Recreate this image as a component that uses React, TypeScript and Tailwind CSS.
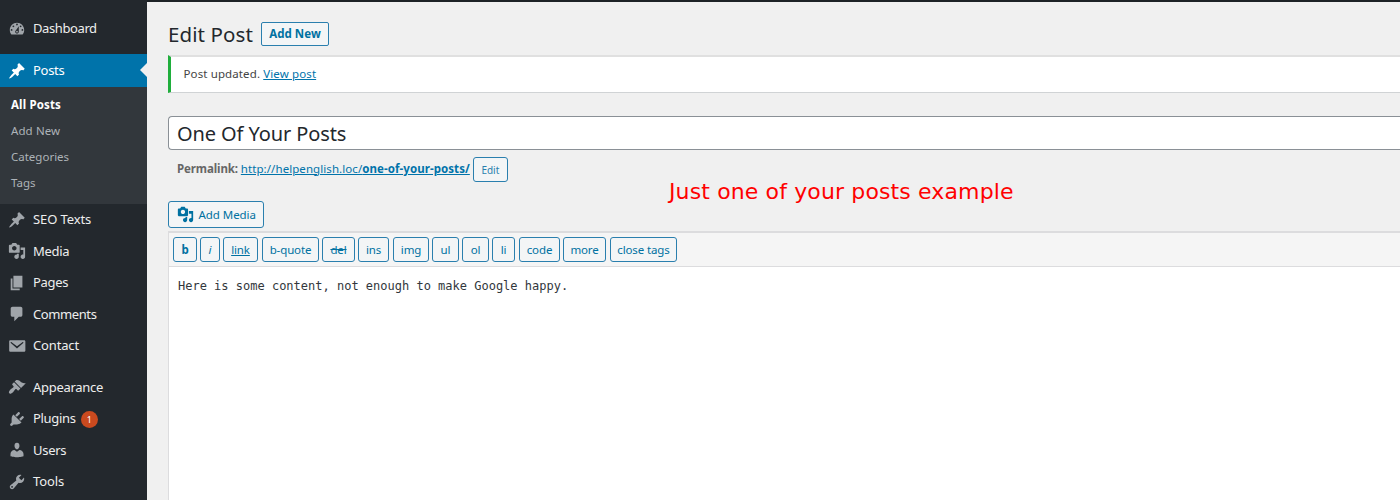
const ICONS = {
  dashboard:
    "M3.76 16h12.48c1.1-1.37 1.76-3.11 1.76-5 0-4.42-3.58-8-8-8s-8 3.58-8 8c0 1.89.66 3.63 1.76 5zM10 4c.55 0 1 .45 1 1s-.45 1-1 1-1-.45-1-1 .45-1 1-1zM6 6c.55 0 1 .45 1 1s-.45 1-1 1-1-.45-1-1 .45-1 1-1zm8 0c.55 0 1 .45 1 1s-.45 1-1 1-1-.45-1-1 .45-1 1-1zm-5.37 5.55L12 7v6c0 1.1-.9 2-2 2s-2-.9-2-2c0-.57.24-1.08.63-1.45zM4 10c.55 0 1 .45 1 1s-.45 1-1 1-1-.45-1-1 .45-1 1-1zm12 0c.55 0 1 .45 1 1s-.45 1-1 1-1-.45-1-1 .45-1 1-1zm-5 3c0-.55-.45-1-1-1s-1 .45-1 1 .45 1 1 1 1-.45 1-1z",
  pin: "M10.44 3.02l1.82-1.82 6.36 6.35-1.83 1.82c-1.05-.68-2.48-.57-3.41.36l-.75.75c-.92.93-1.04 2.35-.35 3.41l-1.83 1.82-2.41-2.41-2.8 2.79c-.42.42-3.38 2.71-3.8 2.29s1.86-3.39 2.28-3.81l2.79-2.79L4.1 9.36l1.83-1.82c1.05.69 2.48.57 3.4-.36l.75-.75c.93-.92 1.05-2.35.36-3.41z",
  media:
    "M13 11V4c0-.55-.45-1-1-1h-1.67L9 1H5L3.67 3H2c-.55 0-1 .45-1 1v7c0 .55.45 1 1 1h10c.55 0 1-.45 1-1zM7 4.5c1.38 0 2.5 1.12 2.5 2.5S8.38 9.5 7 9.5 4.5 8.38 4.5 7 5.62 4.5 7 4.5zM14 6h5v10.5c0 1.38-1.12 2.5-2.5 2.5S14 17.88 14 16.5s1.12-2.5 2.5-2.5c.17 0 .34.02.5.05V9h-3V6zm-4 8.05V13h2v3.5c0 1.38-1.12 2.5-2.5 2.5S7 17.88 7 16.5 8.12 14 9.5 14c.17 0 .34.02.5.05z",
  page: "M6 15V2h10v13H6zm-1 1h8v2H3V5h2v11z",
  comment: "M5 2h9c1.1 0 2 .9 2 2v7c0 1.1-.9 2-2 2h-2l-5 5v-5H5c-1.1 0-2-.9-2-2V4c0-1.1.9-2 2-2z",
  mail: "M2.500 3.500h15.500c.83 0 1.300.67 1.300 1.500v10c0 .83-.67 1.500-1.500 1.500h-15C1.970 16.500 1.300 15.830 1.300 15v-10c0-.83.370-1.500 1.200-1.500zM4 5.700c-.6-.4-1.500.5-.9 1.100L10 12.800l6.900-6c.6-.6-.3-1.500-.9-1.100l-6 4.700z",
  brush:
    "M14.48 11.06L7.41 3.99l1.5-1.5c.5-.56 2.3-.47 3.51.32 1.21.8 1.43 1.28 2.91 2.1 1.18.64 2.45 1.26 4.45.85zm-.71.71L6.7 4.7 4.93 6.47c-.39.39-.39 1.02 0 1.41l1.06 1.06c.39.39.39 1.03 0 1.42-.6.6-1.43 1.11-2.21 1.69-.35.26-.7.53-1.01.84C1.43 14.23.4 16.08 1.4 17.07c.99 1 2.84-.03 4.18-1.36.31-.31.58-.66.85-1.02.57-.78 1.08-1.61 1.69-2.21.39-.39 1.02-.39 1.41 0l1.06 1.06c.39.39 1.02.39 1.41 0z",
  plug: "M13.11 4.36L9.87 7.6 8 5.73l3.24-3.24c.35-.34 1.05-.2 1.56.32.52.51.66 1.21.31 1.55zm-8 1.77l.91-1.12 9.01 9.01-1.19.84c-.71.71-2.63 1.16-3.82 1.16H6.14L4.9 17.26c-.59.59-1.54.59-2.12 0-.59-.58-.59-1.53 0-2.12l1.24-1.24v-3.88c0-1.13.4-3.19 1.09-3.89zm7.26 3.97l3.24-3.24c.34-.35 1.04-.21 1.55.31.52.51.66 1.21.31 1.55l-3.24 3.25z",
  user: "M10 9.25c-2.27 0-2.73-3.44-2.73-3.44C7 4.02 7.82 2 9.97 2c2.16 0 2.98 2.02 2.71 3.81 0 0-.41 3.44-2.68 3.44zm0 2.57L12.72 10c2.39 0 4.52 2.33 4.52 4.53v2.49s-3.65 1.13-7.24 1.13c-3.65 0-7.24-1.13-7.24-1.13v-2.49c0-2.25 1.94-4.48 4.47-4.48z",
  wrench:
    "M16.68 9.77c-1.34 1.34-3.3 1.67-4.95.99l-5.41 6.52c-.99.99-2.59.99-3.58 0s-.99-2.59 0-3.57l6.52-5.42c-.68-1.65-.35-3.61.99-4.95 1.28-1.28 3.12-1.62 4.72-1.06l-2.89 2.89 2.82 2.82 2.86-2.87c.53 1.58.18 3.39-1.08 4.65zM3.81 16.21c.4.39 1.04.39 1.43 0 .4-.4.4-1.04 0-1.43-.39-.4-1.03-.4-1.43 0-.39.39-.39 1.03 0 1.43z",
};

type IconName = keyof typeof ICONS;

function Icon({ name, className }: { name: IconName; className: string }) {
  return (
    <svg viewBox="0 0 20 20" className={className} fill="currentColor" fillRule="evenodd" aria-hidden="true">
      <path d={ICONS[name]} />
    </svg>
  );
}

type Item = { icon: IconName; label: string; badge?: string; track: string };

const contentItems: Item[] = [
  { icon: "pin", label: "SEO Texts", track: "tracking-[-0.1px]" },
  { icon: "media", label: "Media", track: "tracking-[-0.3px]" },
  { icon: "page", label: "Pages", track: "tracking-[-0.3px]" },
  { icon: "comment", label: "Comments", track: "tracking-[-0.4px]" },
  { icon: "mail", label: "Contact", track: "tracking-[-0.15px]" },
];

const adminItems: Item[] = [
  { icon: "brush", label: "Appearance", track: "tracking-[-0.3px]" },
  { icon: "plug", label: "Plugins", badge: "1", track: "tracking-[-0.3px]" },
  { icon: "user", label: "Users", track: "tracking-[-0.3px]" },
  { icon: "wrench", label: "Tools", track: "tracking-[-0.1px]" },
];

function MenuItem({ icon, label, badge, track }: Item) {
  return (
    <li className="flex h-[31.5px] items-center pl-[8px] text-[13px] text-[#eee]">
      <Icon name={icon} className="mr-[7px] size-[18px] shrink-0 text-[#a0a5aa]" />
      <span className={track}>{label}</span>
      {badge && (
        <span className="mt-[2px] ml-[5px] flex size-[17px] items-center justify-center rounded-full bg-[#ca4a1f] text-[9px] text-white">
          {badge}
        </span>
      )}
    </li>
  );
}

function Sidebar() {
  return (
    <nav className="h-full w-[147px] shrink-0 overflow-hidden bg-[#23282d] pt-[13px]">
      <ul>
        <MenuItem icon="dashboard" label="Dashboard" track="tracking-[-0.4px]" />
        <li className="relative mt-[9.5px] flex h-[33px] items-center bg-[#0073aa] pl-[8px] text-[13px] text-white">
          <Icon name="pin" className="mr-[7px] size-[18px] shrink-0" />
          <span className="tracking-[-0.3px]">Posts</span>
          <svg viewBox="0 0 7 14" className="absolute top-[9px] right-0 h-[14px] w-[7px]" fill="#f0f0f0">
            <path d="M7 0v14L0 7z" />
          </svg>
        </li>
      </ul>
      <ul className="flex h-[117px] flex-col bg-[#32373c] pt-[5px] pl-[11px] text-[11.5px] text-[#adb3b8]">
        <li className="flex h-[26px] items-center font-bold tracking-[0.15px] text-white">All Posts</li>
        <li className="flex h-[26px] items-center tracking-[0.1px]">Add New</li>
        <li className="flex h-[26px] items-center">Categories</li>
        <li className="flex h-[26px] items-center">Tags</li>
      </ul>
      <ul>
        {contentItems.map((it) => (
          <MenuItem key={it.label} {...it} />
        ))}
      </ul>
      <ul className="mt-[10px]">
        {adminItems.map((it) => (
          <MenuItem key={it.label} {...it} />
        ))}
      </ul>
    </nav>
  );
}

const quickTags = [
  { label: "b", cls: "w-[24px] mr-[3px] font-bold" },
  { label: "i", cls: "w-[20px] mr-[3px] italic" },
  { label: "link", cls: "w-[35px] mr-[4px] underline" },
  { label: "b-quote", cls: "w-[57px] mr-[3px]" },
  { label: "del", cls: "w-[33px] mr-[3px] line-through" },
  { label: "ins", cls: "w-[31px] mr-[4px]" },
  { label: "img", cls: "w-[36px] mr-[3px]" },
  { label: "ul", cls: "w-[27px] mr-[3px]" },
  { label: "ol", cls: "w-[27px] mr-[3px]" },
  { label: "li", cls: "w-[23px] mr-[4px]" },
  { label: "code", cls: "w-[41px] mr-[3px]" },
  { label: "more", cls: "w-[43px] mr-[4px]" },
  { label: "close tags", cls: "w-[67px]" },
];

export default function App() {
  return (
    <div className="flex h-[500px] w-[1400px] flex-col overflow-hidden bg-[#f0f0f0] font-['Noto_Sans',sans-serif] leading-none">
      <div className="h-[2px] shrink-0 bg-[#1d2226]" />
      <div className="-mt-[2px] flex min-h-0 flex-1">
        <Sidebar />
        <main className="relative flex min-w-0 flex-1 flex-col border-t-2 border-[#1d2226] pl-[21px]">
          <div className="mt-[20px] flex h-[24px] items-center">
            <h1 className="w-[93px] text-[20.5px] tracking-[0.1px] whitespace-nowrap text-[#23282d]">Edit Post</h1>
            <button className="h-[24px] w-[68px] rounded-[2px] border border-[#2a7fae] bg-[#f3f5f6] text-[11.5px] font-bold tracking-[0.05px] whitespace-nowrap text-[#0071a1]">
              Add New
            </button>
          </div>
          <div className="mt-[9px] flex h-[38px] shrink-0 items-center border-t-2 border-b border-l-[3px] border-t-[#e0e0e0] border-b-[#d0d3d5] border-l-[#1fae3c] bg-white pb-[2px] pl-[12.5px] text-[11.5px] text-[#444]">
            <p className="tracking-[0.12px] whitespace-pre">
              Post updated. <a className="text-[#0073aa] underline">View post</a>
            </p>
          </div>
          <div className="mt-[23px] flex h-[34px] shrink-0 items-center rounded-l-[4px] border border-r-0 border-[#8a9096] bg-white pt-[1px] pl-[8px] text-[20px] tracking-[-0.1px] text-[#23282d]">
            One Of Your Posts
          </div>
          <div className="mt-[7px] flex h-[25px] shrink-0 items-center pl-[9px] text-[11.5px] whitespace-pre text-[#666]">
            <b className="mb-[2px] tracking-[-0.1px]">Permalink: </b>
            <a className="mb-[2px] tracking-[0.07px] text-[#0073aa] underline">
              http://helpenglish.loc/<b>one-of-your-posts/</b>
            </a>
            <button className="ml-[3px] h-[25px] w-[35px] rounded-[3px] border border-[#2a7fae] bg-[#f3f5f6] text-[10px] text-[#2a7fae]">
              Edit
            </button>
          </div>
          <button className="mt-[19px] flex h-[27px] w-[96px] shrink-0 items-center rounded-[3px] border border-[#2a7fae] bg-[#f3f5f6] pl-[8px] text-[11.5px] tracking-[-0.05px] whitespace-nowrap text-[#0071a1]">
            <Icon name="media" className="mr-[4.5px] size-[17px] shrink-0" />
            Add Media
          </button>
          <section className="mt-[3px] flex min-h-0 flex-1 flex-col border-t-2 border-l border-[#dcdcde] bg-white">
            <div className="flex h-[34px] shrink-0 items-center border-b border-[#dcdcde] bg-[#f5f5f5] pl-[4px]">
              {quickTags.map((t) => (
                <button
                  key={t.label}
                  className={`h-[25px] shrink-0 rounded-[3px] border border-[#2a7fae] bg-[#f3f5f6] text-[11.5px] tracking-[-0.12px] whitespace-nowrap text-[#0071a1] ${t.cls}`}
                >
                  {t.label}
                </button>
              ))}
            </div>
            <p className="mt-[13px] pl-[9px] font-['DejaVu_Sans_Mono',monospace] text-[12px] text-[#32373c]">
              Here is some content, not enough to make Google happy.
            </p>
          </section>
          <p className="absolute top-[179px] left-[522px] font-['DejaVu_Sans',sans-serif] text-[22px] tracking-[0.13px] whitespace-nowrap text-[#ff0000]">
            Just one of your posts example
          </p>
        </main>
      </div>
    </div>
  );
}
